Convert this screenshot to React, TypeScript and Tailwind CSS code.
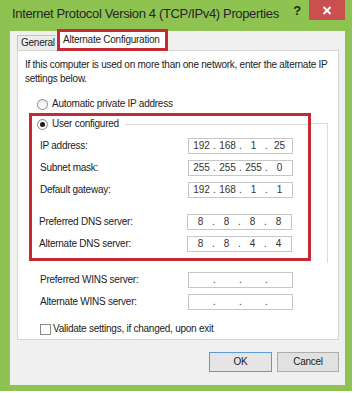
import React from "react";

const font = "font-['Liberation_Sans',Arial,sans-serif]";

const Radio = ({ checked }: { checked?: boolean }) => (
  <span className="w-[11px] h-[11px] rounded-full border border-[#8a8a8a] bg-gradient-to-b from-[#ececec] to-white flex items-center justify-center shrink-0">
    {checked && <span className="w-[5px] h-[5px] rounded-full bg-[#1b1b1b]" />}
  </span>
);

const IpField = ({ parts }: { parts: string[] }) => (
  <div className="w-[105px] h-[16px] border border-[#c6c6c6] bg-white flex items-center px-[1px] text-[#333] tracking-normal">
    {parts.map((p, i) => (
      <React.Fragment key={i}>
        <span className="w-[23px] text-center">{p}</span>
        {i < 3 && <span className="w-[3px] text-center">.</span>}
      </React.Fragment>
    ))}
  </div>
);

const FieldRow = ({ label, parts, className = "" }: { label: string; parts: string[]; className?: string }) => (
  <div className={"flex items-center " + className}>
    <span className="w-[148px] shrink-0 whitespace-nowrap">{label}</span>
    <IpField parts={parts} />
  </div>
);

export default function App() {
  return (
    <div className={"w-[355px] h-[393px] bg-white overflow-hidden text-[10px] leading-[14px] tracking-[-0.25px] text-[#222] " + font}>
      <div className="w-[352px] h-[391px] bg-[#8ec352] flex flex-col pl-[10px] pr-[7px] pb-[6px]">
        {/* title bar */}
        <div className="h-[31px] flex items-start shrink-0">
          <span className="pl-[2px] pt-[6px] text-[13px] leading-[16px] tracking-[-0.35px] whitespace-nowrap text-[#262626]">
            Internet Protocol Version 4 (TCP/IPv4) Properties
          </span>
          <span className="flex-1" />
          <span className="mt-[4px] mr-[8px] text-[13px] leading-[14px] font-bold text-[#1f2a14]">?</span>
          <button className="w-[36px] h-[20px] bg-[#c9504f] flex items-center justify-center">
            <svg width="10" height="9" viewBox="0 0 10 9">
              <path d="M1.5 1 L8.5 8 M8.5 1 L1.5 8" stroke="white" strokeWidth="2" />
            </svg>
          </button>
        </div>

        {/* client area */}
        <div className="flex-1 bg-[#f0f0f0] flex flex-col pl-[7px] pr-[6px]">
          <div className="h-[21px] -mt-[2px] flex items-end shrink-0">
            <div className="w-[39px] h-[15px] border-l border-t border-[#c4c4c4] bg-[#ececec] pl-[3px] leading-[14px] text-[#222] whitespace-nowrap">
              General
            </div>
            <div className="relative z-10 -mb-[1px] ml-[1px] w-[111px] h-[22px] border-[3px] border-[#c52a32] bg-white pl-[3px] leading-[15px] whitespace-nowrap">
              Alternate Configuration
            </div>
          </div>

          <div className="h-[290px] bg-white border border-[#d6d6d6] flex flex-col pl-[7px] pt-[7px]">
            <p className="w-[312px]">
              If this computer is used on more than one network, enter the alternate IP settings below.
            </p>

            <label className="mt-[11px] ml-[12px] flex items-center gap-[4px]">
              <Radio />
              <span>Automatic private IP address</span>
            </label>

            <div className="mt-[2px] ml-[4px] flex">
              <div className="w-[282px] h-[148px] border-[3px] border-[#c52a32] flex flex-col pl-[8px] pt-[1px]">
                <label className="-ml-[3px] flex items-center gap-[4px]">
                  <Radio checked />
                  <span>User configured</span>
                  <span className="flex-1 border-t border-[#dcdcdc] ml-[2px]" />
                </label>
                <FieldRow label="IP address:" parts={["192", "168", "1", "25"]} className="mt-[7px]" />
                <FieldRow label="Subnet mask:" parts={["255", "255", "255", "0"]} className="mt-[6px]" />
                <FieldRow label="Default gateway:" parts={["192", "168", "1", "1"]} className="mt-[6px]" />
                <FieldRow label="Preferred DNS server:" parts={["8", "8", "8", "8"]} className="mt-[16px] -ml-[1px]" />
                <FieldRow label="Alternate DNS server:" parts={["8", "8", "4", "4"]} className="mt-[6px] -ml-[1px]" />
              </div>
              <div className="w-[17px] h-[140px] mt-[10px] border-t border-r border-[#dcdcdc]" />
            </div>

            <div className="pl-[15px] flex flex-col">
              <FieldRow label="Preferred WINS server:" parts={["", "", "", ""]} className="mt-[9px]" />
              <FieldRow label="Alternate WINS server:" parts={["", "", "", ""]} className="mt-[6px]" />
              <label className="mt-[12px] flex items-center gap-[2px]">
                <span className="w-[11px] h-[11px] border border-[#8a8a8a] bg-white shrink-0" />
                <span>Validate settings, if changed, upon exit</span>
              </label>
            </div>
          </div>

          <div className="mt-[12px] flex justify-end gap-[5px]">
            <button className="w-[63px] h-[20px] border border-[#5a9bd8] bg-[#e5e5e5] text-[10px]">OK</button>
            <button className="w-[62px] h-[20px] border border-[#adadad] bg-[#e1e1e1] text-[10px]">Cancel</button>
          </div>
        </div>
      </div>
    </div>
  );
}
